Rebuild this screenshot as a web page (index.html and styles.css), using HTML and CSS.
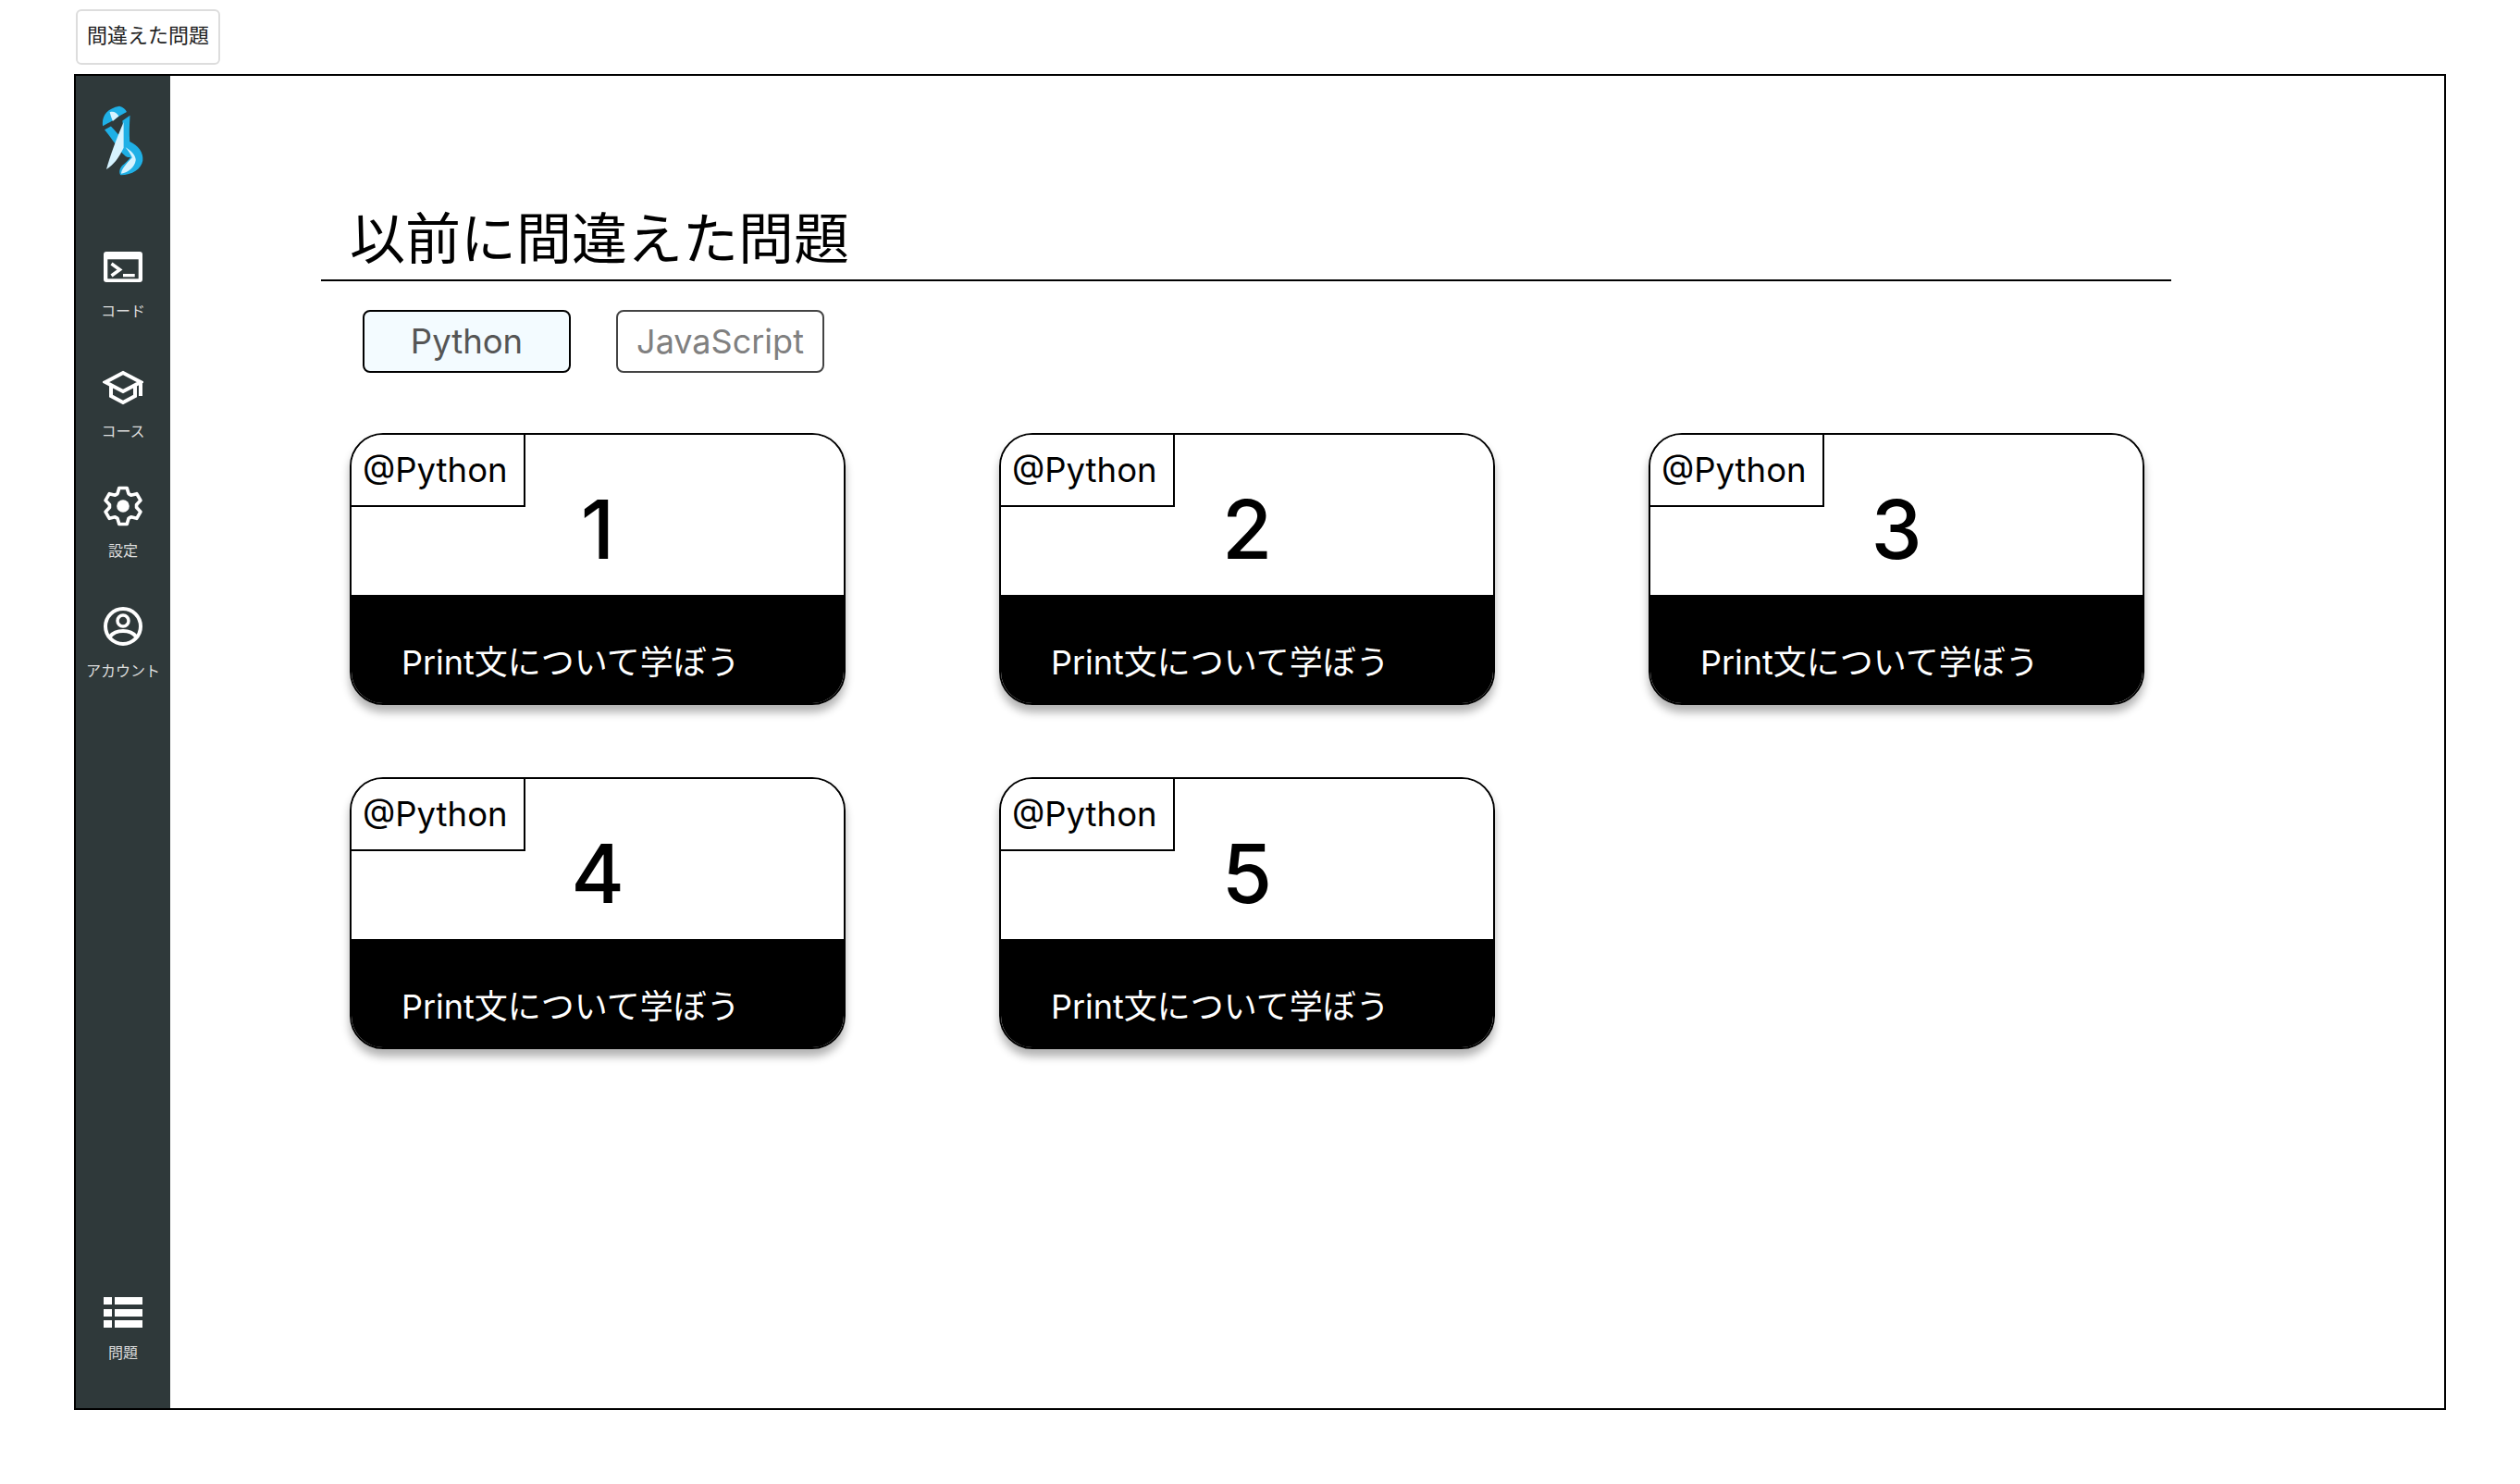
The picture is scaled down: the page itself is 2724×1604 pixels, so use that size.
FILE: index.html
```html
<!DOCTYPE html>
<html lang="ja">
<head>
    <meta charset="UTF-8">
    <title>間違えた問題</title>
    <link rel="stylesheet" href="styles.css">
</head>
<body>
    <button class="top-button">間違えた問題</button>
    <div class="frame">
        <aside class="sidebar">
            <svg class="logo" viewBox="150 340 140 232">
                <path fill="#1fb0e6" d="M153 408C149 376 165 350 208 342C220 345 229 352 232 361L206 376C196 384 176 396 153 408Z"/>
                <path fill="#d6f3ff" d="M176 362C188 358 198 362 206 375L186 392C182 382 179 372 176 362Z"/>
                <path fill="#1fb0e6" d="M159 420L180 409C195 425 208 440 218 450C221 420 220 405 218 390L243 373C241 405 240 430 242 459C270 472 288 494 285 522C281 550 250 570 212 570C206 562 208 548 218 538C228 530 238 520 245 510C225 520 200 470 159 420Z"/>
                <path fill="#d6f3ff" d="M222 395C222 430 222 460 222 480C205 515 190 535 165 551C176 510 198 450 222 395Z"/>
                <path fill="#d6f3ff" d="M228 478C245 488 262 503 262 520C258 545 238 560 214 565C214 552 228 535 250 512C245 500 236 488 228 478Z"/>
            </svg>
            <nav class="side-nav">
                <a class="side-item">
                    <svg class="side-icon" viewBox="0 0 42 44">
                        <rect x="0" y="6" width="42" height="33" rx="3" fill="#fff"/>
                        <rect x="4.3" y="14.3" width="33.4" height="21" fill="#2f393a"/>
                        <path d="M8.5 19L17.5 25.5L8.5 32" fill="none" stroke="#fff" stroke-width="3.5"/>
                        <rect x="21" y="30" width="12.7" height="3.3" fill="#fff"/>
                    </svg>
                    <span>コード</span>
                </a>
                <a class="side-item">
                    <svg class="side-icon" viewBox="0 0 44 44">
                        <path d="M3 17L22 7L41 17L22 27Z M9 21V32L22 39L35 32V21 M41 17V32" fill="none" stroke="#fff" stroke-width="4"/>
                    </svg>
                    <span>コース</span>
                </a>
                <a class="side-item">
                    <svg class="side-icon" viewBox="-1 -1 42 42">
                        <path fill="none" stroke="#fff" stroke-width="3.5" stroke-linejoin="round" d="M14.3 7.2L16 1.4H24L25.7 7.2L28.2 8.7L34.1 7.3L38.1 14.1L33.9 18.5V21.5L38.1 25.9L34.1 32.7L28.2 31.3L25.7 32.8L24 38.6H16L14.3 32.8L11.8 31.3L5.9 32.7L1.9 25.9L6.1 21.5V18.5L1.9 14.1L5.9 7.3L11.8 8.7Z"/>
                        <circle cx="20" cy="20" r="6.5" fill="#fff"/>
                    </svg>
                    <span>設定</span>
                </a>
                <a class="side-item">
                    <svg class="side-icon" viewBox="0 0 44 44">
                        <circle cx="22" cy="22" r="19" fill="none" stroke="#fff" stroke-width="4"/>
                        <circle cx="22" cy="16" r="6" fill="none" stroke="#fff" stroke-width="3.5"/>
                        <path d="M8 33C14 25 30 25 36 33" fill="none" stroke="#fff" stroke-width="4"/>
                    </svg>
                    <span>アカウント</span>
                </a>
            </nav>
            <a class="side-item side-bottom">
                <svg class="side-icon" viewBox="0 0 42 44">
                    <rect x="0" y="5" width="9" height="8" fill="#fff"/>
                    <rect x="12" y="5" width="30" height="8" fill="#fff"/>
                    <rect x="0" y="18" width="9" height="8" fill="#fff"/>
                    <rect x="12" y="18" width="30" height="8" fill="#fff"/>
                    <rect x="0" y="30" width="9" height="8" fill="#fff"/>
                    <rect x="12" y="30" width="30" height="8" fill="#fff"/>
                </svg>
                <span>問題</span>
            </a>
        </aside>
        <main class="content">
            <h1 class="page-title">以前に間違えた問題</h1>
            <div class="tabs">
                <button class="tab tab-active">Python</button>
                <button class="tab">JavaScript</button>
            </div>
            <section class="card-grid">
                <article class="card">
                    <div class="card-top"><span class="card-tag">@Python</span><span class="card-num">1</span></div>
                    <div class="card-bottom">Print文について学ぼう</div>
                </article>
                <article class="card">
                    <div class="card-top"><span class="card-tag">@Python</span><span class="card-num">2</span></div>
                    <div class="card-bottom">Print文について学ぼう</div>
                </article>
                <article class="card">
                    <div class="card-top"><span class="card-tag">@Python</span><span class="card-num">3</span></div>
                    <div class="card-bottom">Print文について学ぼう</div>
                </article>
                <article class="card">
                    <div class="card-top"><span class="card-tag">@Python</span><span class="card-num">4</span></div>
                    <div class="card-bottom">Print文について学ぼう</div>
                </article>
                <article class="card">
                    <div class="card-top"><span class="card-tag">@Python</span><span class="card-num">5</span></div>
                    <div class="card-bottom">Print文について学ぼう</div>
                </article>
            </section>
        </main>
    </div>
</body>
</html>
```

FILE: styles.css
```css
body {
    margin: 0;
    padding: 10px 0 0 82px;
    background: #fff;
    font-family: Inter, "Noto Sans CJK JP", sans-serif;
    color: #000;
}

.top-button {
    display: block;
    box-sizing: border-box;
    width: 156px;
    height: 60px;
    padding: 0 0 8px;
    background: #fff;
    border: 2px solid #ddd;
    border-radius: 6px;
    font-family: "Noto Sans CJK JP", sans-serif;
    font-size: 22px;
    color: #222;
}

.frame {
    display: flex;
    box-sizing: border-box;
    width: 2564px;
    height: 1444px;
    margin: 10px 0 0 -2px;
    border: 2px solid #000;
}

.sidebar {
    display: flex;
    flex-direction: column;
    align-items: center;
    box-sizing: border-box;
    width: 102px;
    padding: 32px 0 50px;
    background: #2f393a;
}

.logo {
    display: block;
    width: 46px;
    height: 76px;
    margin-bottom: 76px;
}

.side-nav {
    display: flex;
    flex-direction: column;
    gap: 49.5px;
}

.side-item {
    display: flex;
    flex-direction: column;
    align-items: center;
    color: #ddd;
    font-family: "Noto Sans CJK JP", sans-serif;
    font-size: 16px;
    line-height: 22px;
    white-space: nowrap;
}

.side-icon {
    display: block;
    width: 44px;
    height: 44px;
    margin-bottom: 14px;
}

.side-bottom {
    margin-top: auto;
}

.side-bottom .side-icon {
    margin-bottom: 9px;
}

.content {
    flex: 1;
    padding: 133px 0 0 163px;
}

.page-title {
    box-sizing: border-box;
    width: 2000px;
    margin: 0;
    padding: 0 0 10px 31px;
    border-bottom: 2px solid #000;
    font-family: "Noto Sans CJK JP", sans-serif;
    font-size: 60px;
    font-weight: 400;
    line-height: 77px;
}

.tabs {
    display: flex;
    gap: 49px;
    margin: 31px 0 0 45px;
}

.tab {
    box-sizing: border-box;
    width: 225px;
    height: 68px;
    padding: 0;
    background: #fff;
    border: 2px solid #444;
    border-radius: 8px;
    font-family: Inter, sans-serif;
    font-size: 36px;
    color: #808080;
}

.tab-active {
    background: #f3fbff;
    border-color: #000;
    color: #555;
    font-size: 36.5px;
}

.card-grid {
    display: grid;
    grid-template-columns: repeat(3, 536px);
    column-gap: 166px;
    row-gap: 78px;
    margin: 65px 0 0 31px;
}

.card {
    overflow: hidden;
    box-sizing: border-box;
    height: 294px;
    border: 2px solid #000;
    border-radius: 36px;
    box-shadow: 0 8px 10px rgba(0, 0, 0, 0.3);
}

.card-top {
    position: relative;
    display: flex;
    justify-content: center;
    align-items: flex-start;
    height: 173px;
    background: #fff;
}

.card-tag {
    position: absolute;
    top: 0;
    left: 0;
    box-sizing: border-box;
    width: 188px;
    height: 78px;
    padding-left: 12px;
    border-right: 2px solid #000;
    border-bottom: 2px solid #000;
    font-size: 36.5px;
    line-height: 76px;
}

.card-num {
    margin-top: 47px;
    font-size: 88px;
    font-weight: 500;
    line-height: 110px;
}

.card-bottom {
    box-sizing: border-box;
    height: 119px;
    padding: 32px 0 0 54px;
    background: #000;
    color: #fff;
    font-size: 36px;
    line-height: 82px;
}
```
